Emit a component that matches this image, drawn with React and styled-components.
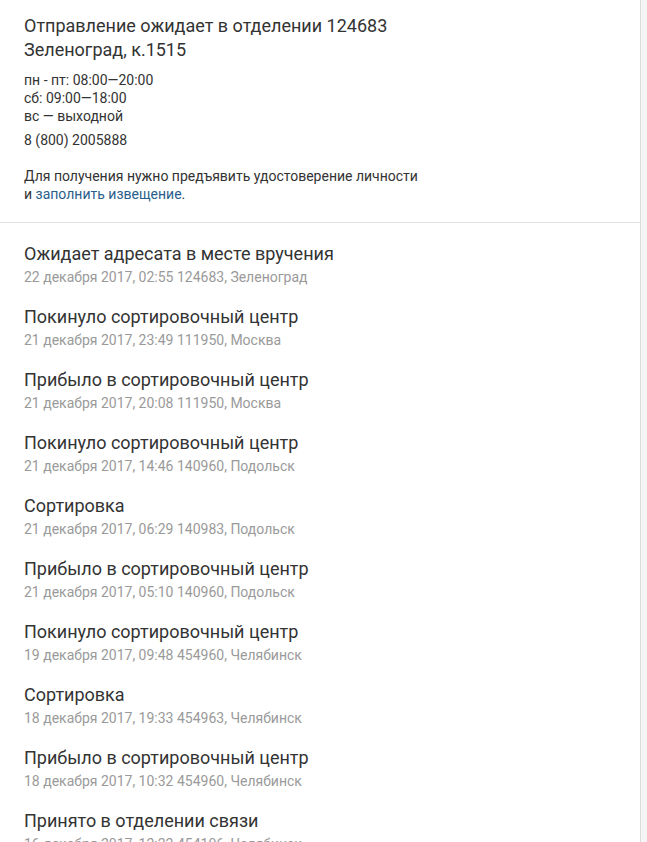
import styled, { createGlobalStyle } from "styled-components";

const Global = createGlobalStyle`
body {
  margin: 0;
  background: #f5f5f5;
  font-family: Roboto, "Noto Sans", sans-serif;
}
`;

const Panel = styled.div`
width: 641px;
min-height: 842px;
background: #fff;
border-right: 1px solid #dcdcdc;
box-sizing: border-box;
`;

const Office = styled.section`
padding: 14px 24px 19px 24px;
border-bottom: 1px solid #e3e3e3;
`;

const OfficeTitle = styled.h2`
margin: 0;
font-size: 18px;
font-weight: 400;
line-height: 24px;
color: #333;
`;

const Hours = styled.div`
margin-top: 9px;
font-size: 14px;
line-height: 18px;
color: #333;
`;

const Phone = styled.div`
margin-top: 6px;
font-size: 14px;
line-height: 18px;
color: #333;
`;

const Note = styled.p`
margin: 18px 0 0;
font-size: 14px;
line-height: 18px;
color: #333;
`;

const Link = styled.a`
color: #2a5e8c;
text-decoration: none;
`;

const Events = styled.ul`
list-style: none;
margin: 0;
padding: 19px 24px 0;
`;

const Event = styled.li`
height: 63px;
`;

const EventTitle = styled.div`
font-size: 18px;
line-height: 24px;
color: #333;
`;

const EventMeta = styled.div`
margin-top: 1px;
font-size: 14px;
line-height: 20px;
color: #9a9a9a;
`;

const events = [
  ["Ожидает адресата в месте вручения", "22 декабря 2017, 02:55 124683, Зеленоград"],
  ["Покинуло сортировочный центр", "21 декабря 2017, 23:49 111950, Москва"],
  ["Прибыло в сортировочный центр", "21 декабря 2017, 20:08 111950, Москва"],
  ["Покинуло сортировочный центр", "21 декабря 2017, 14:46 140960, Подольск"],
  ["Сортировка", "21 декабря 2017, 06:29 140983, Подольск"],
  ["Прибыло в сортировочный центр", "21 декабря 2017, 05:10 140960, Подольск"],
  ["Покинуло сортировочный центр", "19 декабря 2017, 09:48 454960, Челябинск"],
  ["Сортировка", "18 декабря 2017, 19:33 454963, Челябинск"],
  ["Прибыло в сортировочный центр", "18 декабря 2017, 10:32 454960, Челябинск"],
  ["Принято в отделении связи", "16 декабря 2017, 12:22 454106, Челябинск"],
];

export default function App() {
  return (
    <>
      <Global />
      <Panel>
        <Office>
          <OfficeTitle>
            Отправление ожидает в отделении 124683
            <br />
            Зеленоград, к.1515
          </OfficeTitle>
          <Hours>
            пн - пт: 08:00—20:00
            <br />
            сб: 09:00—18:00
            <br />
            вс — выходной
          </Hours>
          <Phone>8 (800) 2005888</Phone>
          <Note>
            Для получения нужно предъявить удостоверение личности
            <br />и <Link href="#">заполнить извещение</Link>.
          </Note>
        </Office>
        <Events>
          {events.map(([title, meta], i) => (
            <Event key={i}>
              <EventTitle>{title}</EventTitle>
              <EventMeta>{meta}</EventMeta>
            </Event>
          ))}
        </Events>
      </Panel>
    </>
  );
}
